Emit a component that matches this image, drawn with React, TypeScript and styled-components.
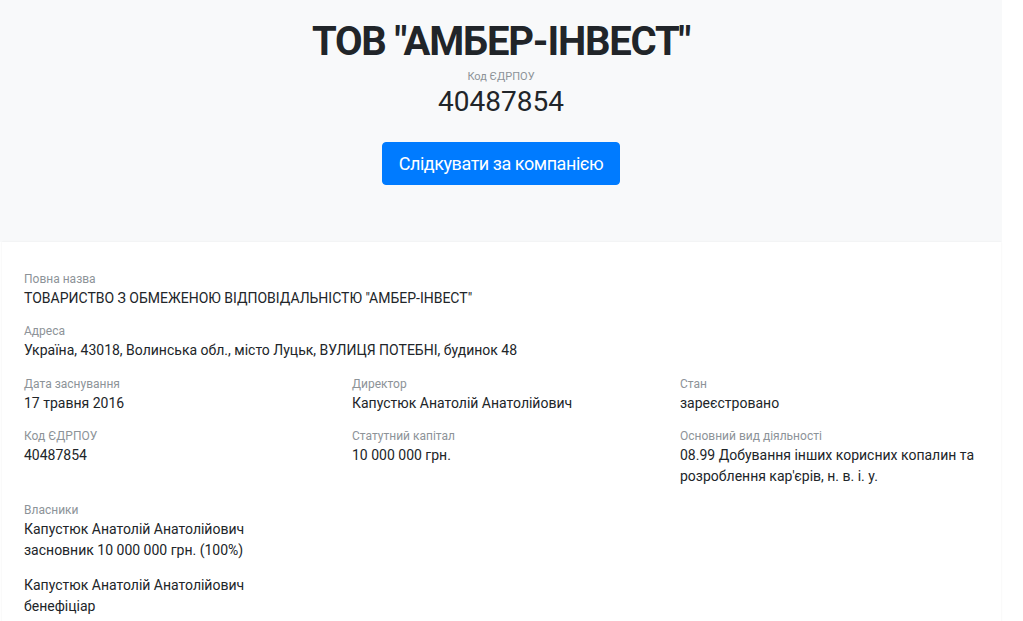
import React from "react";
import styled, { createGlobalStyle } from "styled-components";

const GlobalStyle = createGlobalStyle`
  html, body { margin: 0; padding: 0; background: #ffffff; }
  body {
    font-family: Roboto, "Noto Sans", "Liberation Sans", sans-serif;
    color: #212529;
    -webkit-font-smoothing: antialiased;
  }
  * { box-sizing: border-box; }
`;

const Page = styled.div`
  width: 1002px;
  display: flex;
  flex-direction: column;
`;

const Hero = styled.header`
  background: #f8f9fa;
  padding: 18px 0 57px;
  display: flex;
  flex-direction: column;
  align-items: center;
  text-align: center;
`;

const Title = styled.h1`
  margin: 0 0 2.5px;
  font-size: 40px;
  line-height: 48px;
  font-weight: 700;
  letter-spacing: -1.2px;
`;

const HeroLabel = styled.div`
  font-size: 11px;
  line-height: 16px;
  color: #8d9398;
`;

const Code = styled.div`
  font-size: 28px;
  line-height: 33.6px;
  font-weight: 400;
`;

const FollowButton = styled.button`
  margin-top: 23.5px;
  font-family: inherit;
  font-size: 18px;
  line-height: 27px;
  letter-spacing: -0.45px;
  padding: 7px 16px;
  color: #ffffff;
  background: #007bff;
  border: 1px solid #007bff;
  border-radius: 4px;
  cursor: pointer;
`;

const Card = styled.section`
  margin: 0 1px 0 2px;
  background: #ffffff;
  box-shadow: 0 0 2px rgba(0, 0, 0, 0.07);
  padding: 28px 0 20px 22px;
  display: grid;
  grid-template-columns: repeat(3, 328px);
  align-items: start;
`;

const Field = styled.div<{ $wide?: boolean }>`
  grid-column: ${(p) => (p.$wide ? "1 / -1" : "auto")};
  padding-right: 15px;
  margin-bottom: 13.5px;
`;

const Label = styled.div`
  font-size: 12px;
  line-height: 18px;
  color: #8d9398;
`;

const Value = styled.div`
  font-size: 14px;
  line-height: 21px;
  color: #212529;
`;

const Owner = styled.div`
  & + & {
    margin-top: 14px;
  }
`;

type Item = { label: string; value: string; wide?: boolean };

const items: Item[] = [
  { label: "Повна назва", value: 'ТОВАРИСТВО З ОБМЕЖЕНОЮ ВІДПОВІДАЛЬНІСТЮ "АМБЕР-ІНВЕСТ"', wide: true },
  { label: "Адреса", value: "Україна, 43018, Волинська обл., місто Луцьк, ВУЛИЦЯ ПОТЕБНІ, будинок 48", wide: true },
  { label: "Дата заснування", value: "17 травня 2016" },
  { label: "Директор", value: "Капустюк Анатолій Анатолійович" },
  { label: "Стан", value: "зареєстровано" },
  { label: "Код ЄДРПОУ", value: "40487854" },
  { label: "Статутний капітал", value: "10 000 000 грн." },
  { label: "Основний вид діяльності", value: "08.99 Добування інших корисних копалин та розроблення кар'єрів, н. в. і. у." },
];

const owners = [
  { name: "Капустюк Анатолій Анатолійович", role: "засновник 10 000 000 грн. (100%)" },
  { name: "Капустюк Анатолій Анатолійович", role: "бенефіціар" },
];

export default function App() {
  return (
    <>
      <GlobalStyle />
      <Page>
        <Hero>
          <Title>ТОВ "АМБЕР-ІНВЕСТ"</Title>
          <HeroLabel>Код ЄДРПОУ</HeroLabel>
          <Code>40487854</Code>
          <FollowButton type="button">Слідкувати за компанією</FollowButton>
        </Hero>
        <Card>
          {items.map((it) => (
            <Field key={it.label} $wide={it.wide}>
              <Label>{it.label}</Label>
              <Value>{it.value}</Value>
            </Field>
          ))}
          <Field>
            <Label>Власники</Label>
            {owners.map((o, i) => (
              <Owner key={i}>
                <Value>{o.name}</Value>
                <Value>{o.role}</Value>
              </Owner>
            ))}
          </Field>
        </Card>
      </Page>
    </>
  );
}
